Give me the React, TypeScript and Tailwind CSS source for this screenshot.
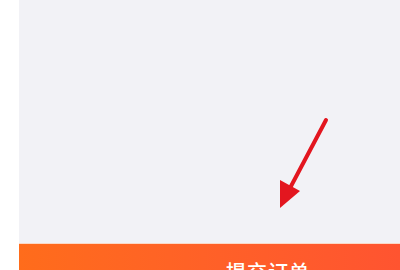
export default function App() {
  return (
    <div className="w-[400px] h-[270px] flex bg-white overflow-hidden" style={{ fontFamily: '"Noto Sans CJK SC", "Noto Sans", sans-serif' }}>
      {/* left edge */}
      <div className="w-[19px] bg-white" />

      <div className="flex-1 flex flex-col">
        {/* page body */}
        <div className="relative h-[243px] bg-[#f2f2f6]">
          {/* annotation arrow */}
          <svg className="absolute left-[252px] top-[112px]" width="70" height="104" viewBox="0 0 70 104">
            <line x1="55" y1="8" x2="18" y2="78" stroke="#e3161f" strokeWidth="4" strokeLinecap="round" />
            <polygon points="9,96 9,68 29,79" fill="#e3161f" />
          </svg>
        </div>

        {/* submit bar */}
        <div className="h-[27px] border-t border-[#fbd9c6] bg-gradient-to-r from-[#ff6c1b] to-[#ff5430] overflow-hidden">
          <div className="pl-[207px] pt-[14px] text-white text-[20px] font-medium leading-[28px] tracking-[1px] whitespace-nowrap">
            提交订单
          </div>
        </div>
      </div>
    </div>
  );
}
